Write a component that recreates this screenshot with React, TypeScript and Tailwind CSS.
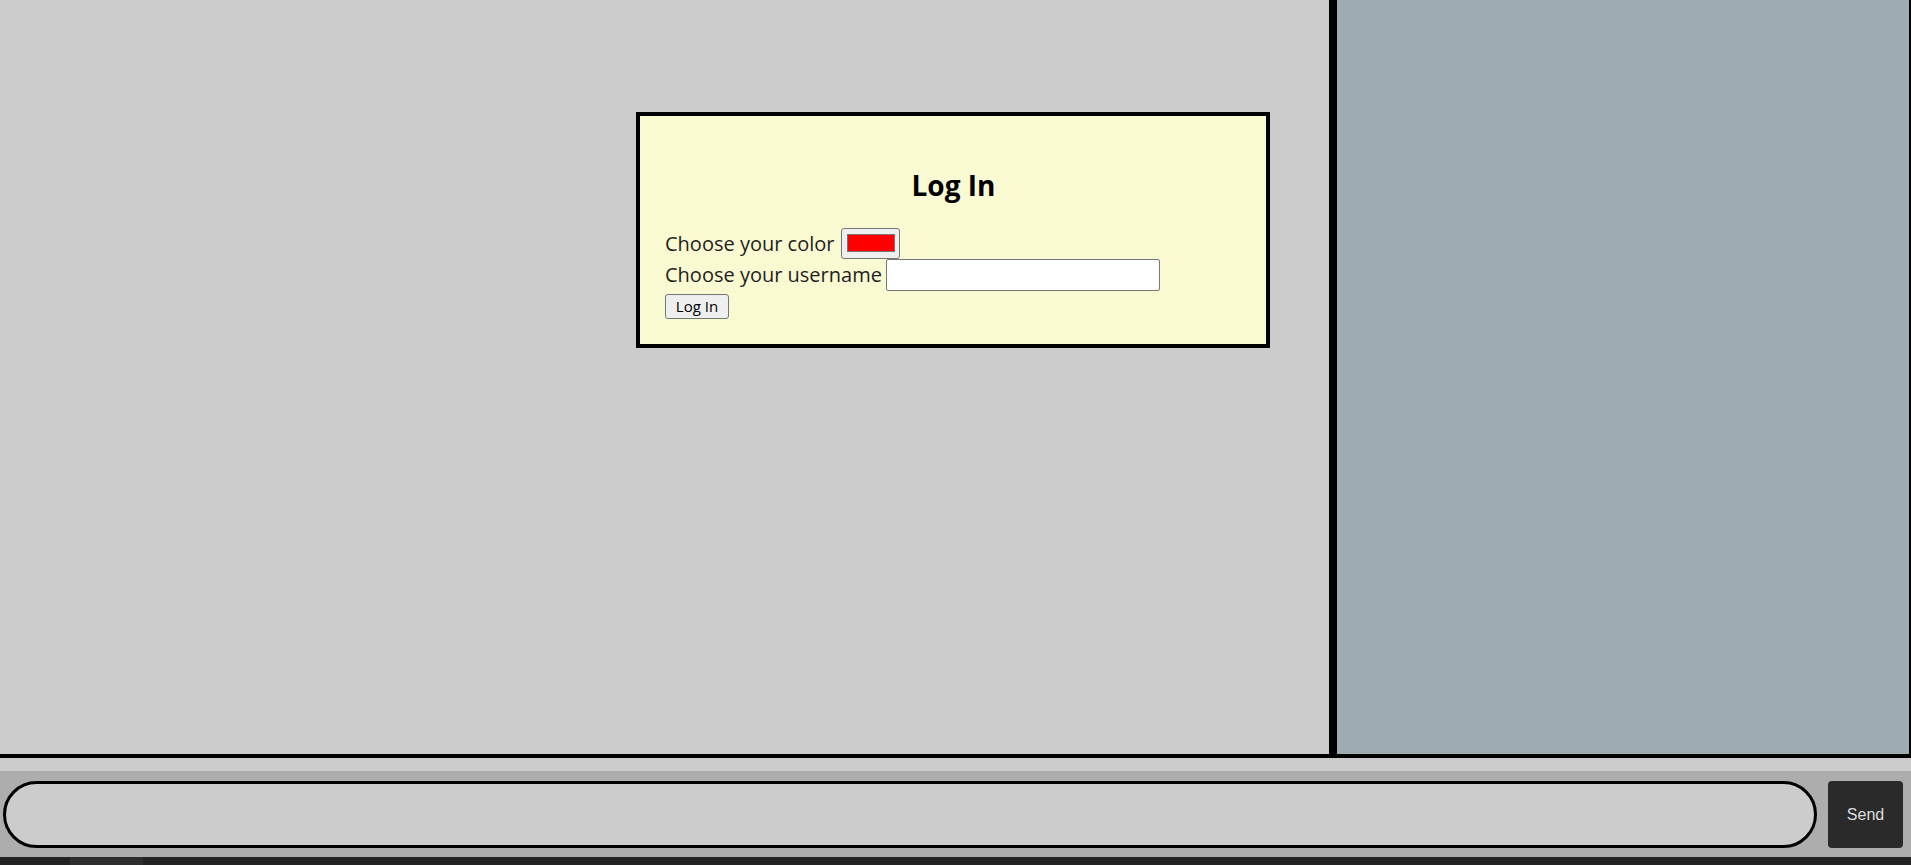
import { useState } from 'react'

// Chat page with a login modal laid over the message area

export default function App() {
  const [color] = useState('#ff0000')
  const [username, setUsername] = useState('')
  const [message, setMessage] = useState('')

  return (
    <div className="relative flex h-[865px] w-full flex-col overflow-hidden font-['Open_Sans',sans-serif]">
      {/* Messages + users */}
      <div className="flex h-[758px] border-b-4 border-black">
        <div className="flex-1 bg-[#cccccc]" />
        <div className="w-[582px] border-l-8 border-r-2 border-black bg-[#9eabb0]" />
      </div>

      <div className="h-[13px] bg-[#cccccc]" />

      {/* Composer */}
      <div className="flex h-[86px] items-start bg-[#adadad] pt-[10px]">
        <input
          value={message}
          onChange={(e) => setMessage(e.target.value)}
          className="ml-[3px] h-[67px] w-[1814px] rounded-full border-[3px] border-black bg-[#cccccc] px-6 outline-none"
        />
        <button
          type="button"
          className="ml-[11px] h-[67px] w-[75px] rounded-[4px] bg-[#2a2a2a] font-['Liberation_Sans',Arial,sans-serif] text-[16px] text-[#dedede]"
        >
          Send
        </button>
      </div>

      <div className="flex h-[8px] bg-[#232323]">
        <div className="ml-[70px] w-[73px] bg-[#2e2e2e]" />
      </div>

      {/* Login modal */}
      <div className="absolute left-[636px] top-[112px] h-[236px] w-[634px] border-4 border-black bg-[#fafad2] pl-[25px] pr-[24px] pt-[50px] text-[#1e1e1e]">
        <h2 className="text-center text-[28px] font-bold leading-[38px] text-black">Log In</h2>
        <div className="mt-[23px] text-[20px]">
          <div className="flex h-[32px] items-center">
            <span className="mt-[2px]">Choose your color</span>
            <button
              type="button"
              className="ml-[7px] flex h-[31px] w-[59px] items-center justify-center rounded-[3px] border border-[#767676] bg-[#efefef]"
            >
              <span className="block h-[18px] w-[48px] border border-[#777777]" style={{ background: color }} />
            </button>
          </div>
          <div className="flex h-[32px] items-center">
            <span>Choose your username</span>
            <input
              value={username}
              onChange={(e) => setUsername(e.target.value)}
              className="ml-[4px] h-[32px] w-[274px] rounded-[2px] border border-[#767676] bg-white px-1 text-[16px] outline-none"
            />
          </div>
          <button
            type="button"
            className="mt-[3px] flex h-[25px] w-[64px] items-center justify-center rounded-[3px] border border-[#767676] bg-[#efefef] text-[15px] text-black"
          >
            Log In
          </button>
        </div>
      </div>
    </div>
  )
}
